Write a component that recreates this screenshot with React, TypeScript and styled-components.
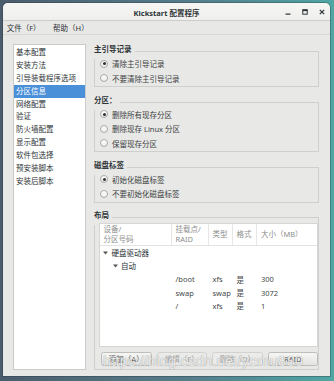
import styled, { createGlobalStyle } from "styled-components";

const GlobalStyle = createGlobalStyle`
  html, body {
    margin: 0;
    padding: 0;
    width: 334px;
    height: 381px;
    overflow: hidden;
  }
  body {
    background: linear-gradient(90deg, #4b5d6d 0%, #55808c 60%, #4fa7a3 100%);
    font-family: "Noto Sans", "Noto Sans CJK SC", sans-serif;
  }
  * { box-sizing: border-box; }
`;

const Window = styled.div`
  position: relative;
  margin: 3px 4px 0 3px;
  width: 327px;
  height: 373px;
  background: #e8e8e7;
  border-radius: 5px 5px 0 0;
  overflow: hidden;
  display: flex;
  flex-direction: column;
  box-shadow: 0 0 0 1px rgba(40, 50, 60, 0.35);
`;

const TitleBar = styled.div`
  height: 19px;
  display: grid;
  grid-template-columns: 1fr auto 1fr;
  align-items: center;
  background: linear-gradient(#f6f6f5, #efefee);
  border-bottom: 1px solid #cdcdcb;
`;

const Title = styled.div`
  grid-column: 2;
  font-size: 7.5px;
  font-weight: 700;
  color: #2e3436;
  padding-top: 1px;
`;

const Controls = styled.div`
  grid-column: 3;
  justify-self: end;
  display: flex;
  align-items: center;
  gap: 11px;
  padding-right: 5px;
`;

const MenuBar = styled.div`
  height: 14px;
  display: flex;
  align-items: center;
  gap: 12.5px;
  padding-left: 3.7px;
  border-bottom: 1px solid #d8d8d6;
`;

const MenuItem = styled.span`
  font-size: 7.5px;
  color: #2e3436;
`;

const Body = styled.div`
  flex: 1;
  display: flex;
  gap: 8px;
  padding: 9px 11px 6px 10px;
`;

const Sidebar = styled.ul`
  list-style: none;
  margin: 0;
  padding: 1px 0 0;
  width: 73px;
  background: #ffffff;
  border: 1px solid #cbcbc9;
`;

const SideItem = styled.li<{ $active?: boolean }>`
  height: 12.9px;
  line-height: 12.9px;
  padding-left: 2px;
  font-size: 7.5px;
  white-space: nowrap;
  color: ${(p) => (p.$active ? "#ffffff" : "#2e3436")};
  background: ${(p) => (p.$active ? "#4a90d9" : "transparent")};
`;

const Pane = styled.div`
  flex: 1;
  display: flex;
  flex-direction: column;
  gap: 7.5px;
`;

const Frame = styled.fieldset`
  margin: 0;
  padding: 0 0 0.5px;
  border: 1px solid #cfcfcd;
  min-width: 0;
`;

const Legend = styled.legend`
  padding: 0 3px 4px 0;
  margin-left: -1px;
  font-size: 7.5px;
  line-height: 11px;
  font-weight: 700;
  color: #2e3436;
`;

const Options = styled.div`
  margin-top: -2.5px;
  padding-left: 5px;
`;

const Option = styled.div`
  height: 14.5px;
  display: flex;
  align-items: center;
  gap: 4px;
  font-size: 7.5px;
  color: #3c3f41;
`;

const Radio = styled.span<{ $checked?: boolean }>`
  width: 8px;
  height: 8px;
  border-radius: 50%;
  border: 1px solid #a9a9a7;
  background: linear-gradient(#ffffff, #ededec);
  display: flex;
  align-items: center;
  justify-content: center;
  &::after {
    content: "";
    width: 3px;
    height: 3px;
    border-radius: 50%;
    background: ${(p) => (p.$checked ? "#2e3436" : "transparent")};
  }
`;

const LayoutInner = styled.div`
  margin-top: -2px;
  padding: 0 0 3px 4px;
`;

const Table = styled.div`
  height: 124px;
  background: #ffffff;
  border: 1px solid #d6d6d4;
`;

const Cols = "72px 37px 24px 24.4px 1fr";

const HeaderRow = styled.div`
  display: grid;
  grid-template-columns: ${Cols};
  height: 22px;
  border-bottom: 1px solid #e3e3e1;
`;

const HeaderCell = styled.div`
  display: flex;
  flex-direction: column;
  justify-content: center;
  padding-left: 3.5px;
  font-size: 7.5px;
  line-height: 9.3px;
  color: #8c8e8c;
  white-space: nowrap;
  &:not(:last-child) {
    border-right: 1px solid #e6e6e4;
  }
`;

const Row = styled.div`
  display: grid;
  grid-template-columns: ${Cols};
  height: 13.3px;
  align-items: center;
  font-size: 7.5px;
  color: #454849;
  white-space: nowrap;
`;

const Cell = styled.div`
  padding-left: 3.5px;
`;

const TreeCell = styled.div<{ $level: number }>`
  grid-column: 1 / span 2;
  display: flex;
  align-items: center;
  gap: 3.5px;
  padding-left: ${(p) => 3 + p.$level * 9.5}px;
  color: #2e3436;
`;

const Buttons = styled.div`
  display: grid;
  grid-template-columns: repeat(4, 1fr);
  gap: 5px;
  margin-top: 5px;
  padding-left: 2px;
`;

const Button = styled.button<{ $disabled?: boolean }>`
  height: 13.5px;
  padding: 0;
  font-family: inherit;
  font-size: 7.5px;
  color: ${(p) => (p.$disabled ? "#a3a5a4" : "#55595a")};
  background: ${(p) =>
    p.$disabled ? "#ebebea" : "linear-gradient(#f6f6f5, #e3e3e1)"};
  border: 1px solid ${(p) => (p.$disabled ? "#d2d2d0" : "#bdbdbb")};
  border-radius: 2.5px;
`;

const Watermark = styled.div`
  position: absolute;
  left: 100px;
  top: 349px;
  font-family: "Liberation Sans", sans-serif;
  font-size: 15px;
  color: rgba(255, 255, 255, 0.82);
  text-shadow: 0 0 1px rgba(0, 0, 0, 0.45);
  pointer-events: none;
  white-space: nowrap;
`;

const Arrow = () => (
  <svg width="5" height="4" viewBox="0 0 5 4">
    <path d="M0 0.5 L5 0.5 L2.5 3.5 Z" fill="#555753" />
  </svg>
);

const MinIcon = () => (
  <svg width="6" height="6" viewBox="0 0 6 6">
    <rect x="0.5" y="4.5" width="5" height="1.2" fill="#2e3436" />
  </svg>
);

const MaxIcon = () => (
  <svg width="6" height="6" viewBox="0 0 6 6">
    <rect x="0.8" y="0.8" width="4.4" height="4.4" fill="none" stroke="#2e3436" strokeWidth="1" />
    <rect x="0.5" y="0.5" width="5" height="1.6" fill="#2e3436" />
  </svg>
);

const CloseIcon = () => (
  <svg width="6" height="6" viewBox="0 0 6 6">
    <path d="M0.8 0.8 L5.2 5.2 M5.2 0.8 L0.8 5.2" stroke="#2e3436" strokeWidth="1.2" />
  </svg>
);

const sections = [
  "基本配置",
  "安装方法",
  "引导装载程序选项",
  "分区信息",
  "网络配置",
  "验证",
  "防火墙配置",
  "显示配置",
  "软件包选择",
  "预安装脚本",
  "安装后脚本",
];

const groups = [
  { title: "主引导记录", options: ["清除主引导记录", "不要清除主引导记录"] },
  { title: "分区：", options: ["删除所有现存分区", "删除现存 Linux 分区", "保留现存分区"] },
  { title: "磁盘标签", options: ["初始化磁盘标签", "不要初始化磁盘标签"] },
];

const partitions = [
  { mount: "/boot", type: "xfs", format: "是", size: "300" },
  { mount: "swap", type: "swap", format: "是", size: "3072" },
  { mount: "/", type: "xfs", format: "是", size: "1" },
];

export default function App() {
  return (
    <>
      <GlobalStyle />
      <Window>
        <TitleBar>
          <Title>Kickstart 配置程序</Title>
          <Controls>
            <MinIcon />
            <MaxIcon />
            <CloseIcon />
          </Controls>
        </TitleBar>
        <MenuBar>
          <MenuItem>文件（F）</MenuItem>
          <MenuItem>帮助（H）</MenuItem>
        </MenuBar>
        <Body>
          <Sidebar>
            {sections.map((s) => (
              <SideItem key={s} $active={s === "分区信息"}>
                {s}
              </SideItem>
            ))}
          </Sidebar>
          <Pane>
            {groups.map((g) => (
              <Frame key={g.title}>
                <Legend>{g.title}</Legend>
                <Options>
                  {g.options.map((o, i) => (
                    <Option key={o}>
                      <Radio $checked={i === 0} />
                      {o}
                    </Option>
                  ))}
                </Options>
              </Frame>
            ))}
            <Frame>
              <Legend>布局</Legend>
              <LayoutInner>
                <Table>
                  <HeaderRow>
                    <HeaderCell>
                      <span>设备/</span>
                      <span>分区号码</span>
                    </HeaderCell>
                    <HeaderCell>
                      <span>挂载点/</span>
                      <span>RAID</span>
                    </HeaderCell>
                    <HeaderCell>类型</HeaderCell>
                    <HeaderCell>格式</HeaderCell>
                    <HeaderCell>大小（MB）</HeaderCell>
                  </HeaderRow>
                  <Row>
                    <TreeCell $level={0}>
                      <Arrow />
                      硬盘驱动器
                    </TreeCell>
                  </Row>
                  <Row>
                    <TreeCell $level={1}>
                      <Arrow />
                      自动
                    </TreeCell>
                  </Row>
                  {partitions.map((p) => (
                    <Row key={p.mount}>
                      <Cell />
                      <Cell>{p.mount}</Cell>
                      <Cell>{p.type}</Cell>
                      <Cell>{p.format}</Cell>
                      <Cell>{p.size}</Cell>
                    </Row>
                  ))}
                </Table>
                <Buttons>
                  <Button>添加（A）</Button>
                  <Button $disabled>编辑（E）</Button>
                  <Button $disabled>删除（D）</Button>
                  <Button>RAID</Button>
                </Buttons>
              </LayoutInner>
            </Frame>
          </Pane>
        </Body>
        <Watermark>https://blog.csdn.net/yemu880</Watermark>
      </Window>
    </>
  );
}
